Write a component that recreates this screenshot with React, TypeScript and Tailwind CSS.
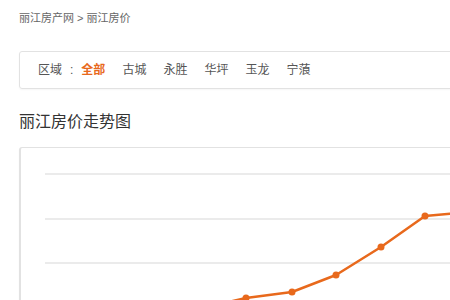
const AREAS = ['古城', '永胜', '华坪', '玉龙', '宁蒗'];

// chart coordinates are relative to the panel's inner box (page x - 21, page y - 149)
const GRID_Y = [26, 71, 115, 159];
const POINTS = [
  [136, 164],
  [181, 160],
  [225, 150],
  [271, 144],
  [315, 127],
  [360, 99],
  [404, 68],
  [449, 64],
  [494, 58],
];

export default function App() {
  const line = POINTS.map(([x, y]) => `${x},${y}`).join(' ');

  return (
    <div className="h-[300px] w-[450px] overflow-hidden bg-white font-['Liberation_Sans','Noto_Sans_CJK_SC',sans-serif]">
      <div className="w-[900px] pl-[19px]">
        <p className="pt-[11px] text-[11px] leading-[14px] text-[#666]">丽江房产网 &gt; 丽江房价</p>

        <div className="mt-[26px] flex h-[38px] items-center rounded-[3px] border border-[#e2e2e2] pl-[18px] text-[12px] text-[#555] shadow-[0_1px_2px_rgba(0,0,0,0.04)]">
          <span>区域</span>
          <span className="ml-[8px] mr-[8px]">:</span>
          <span className="font-bold text-[#e8691c]">全部</span>
          {AREAS.map((a) => (
            <span key={a} className="ml-[17px]">
              {a}
            </span>
          ))}
        </div>

        <h2 className="mt-[23px] text-[16px] leading-[20px] text-[#333]">丽江房价走势图</h2>

        <div className="mt-[15px] h-[200px] rounded-[3px] border border-[#e2e2e2] border-l-2 shadow-[0_1px_2px_rgba(0,0,0,0.04)]">
          <svg width="880" height="200" className="block">
            {GRID_Y.map((y) => (
              <line key={y} x1="24" x2="880" y1={y} y2={y} stroke="#e4e4e4" strokeWidth="1.5" />
            ))}
            <polyline points={line} fill="none" stroke="#e8691c" strokeWidth="2.5" strokeLinejoin="round" />
            {POINTS.map(([x, y]) => (
              <circle key={x} cx={x} cy={y} r="3.5" fill="#e8691c" />
            ))}
          </svg>
        </div>
      </div>
    </div>
  );
}
